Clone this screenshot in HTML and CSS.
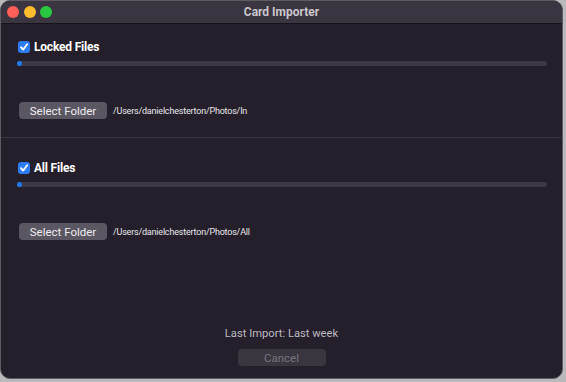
FILE: index.html
```html
<!DOCTYPE html>
<html lang="en">
<head>
  <meta charset="UTF-8">
  <title>Card Importer</title>
  <link rel="stylesheet" href="styles.css">
</head>
<body>

<div class="window">
  <!-- TITLE BAR -->
  <div class="titlebar">
    <div class="lights">
      <span class="light red"></span>
      <span class="light yellow"></span>
      <span class="light green"></span>
    </div>
    <div class="title">Card Importer</div>
  </div>

  <div class="section first">
    <label class="check-row">
      <span class="checkbox">
        <svg width="12" height="12" viewBox="0 0 12 12"><path d="M3 6.2 L5.1 8.6 L9.2 3.2" fill="none" stroke="#fff" stroke-width="1.8" stroke-linecap="round" stroke-linejoin="round"/></svg>
      </span>
      Locked Files
    </label>
    <div class="progress"><div class="progress-fill"></div></div>
    <div class="folder-row">
      <button class="btn">Select Folder</button>
      <span class="path">/Users/danielchesterton/Photos/In</span>
    </div>
  </div>

  <div class="divider"></div>

  <div class="section">
    <label class="check-row">
      <span class="checkbox">
        <svg width="12" height="12" viewBox="0 0 12 12"><path d="M3 6.2 L5.1 8.6 L9.2 3.2" fill="none" stroke="#fff" stroke-width="1.8" stroke-linecap="round" stroke-linejoin="round"/></svg>
      </span>
      All Files
    </label>
    <div class="progress"><div class="progress-fill"></div></div>
    <div class="folder-row">
      <button class="btn">Select Folder</button>
      <span class="path">/Users/danielchesterton/Photos/All</span>
    </div>
  </div>

  <div class="footer">
    <div class="last-import">Last Import: Last week</div>
    <button class="btn btn-disabled">Cancel</button>
  </div>
</div>

</body>
</html>
```

FILE: styles.css
```css
body {
  margin: 0;
  background-color: #b9b9bb;
  font-family: Roboto, "Liberation Sans", sans-serif;
}

.window {
  width: 561px;
  height: 377px;
  background-color: #241f2a;
  border: 1px solid #5e5b63;
  border-radius: 10px;
  overflow: hidden;
  display: flex;
  flex-direction: column;
}

.titlebar {
  height: 22px;
  background-color: #3a3540;
  border-bottom: 1px solid #16131a;
  display: flex;
  align-items: center;
  position: relative;
}

.lights {
  display: flex;
  gap: 4.5px;
  padding-left: 6px;
}

.light {
  width: 12px;
  height: 12px;
  border-radius: 50%;
}

.red { background-color: #fe5f57; }
.yellow { background-color: #febc2e; }
.green { background-color: #28c840; }

.title {
  position: absolute;
  left: 0;
  right: 0;
  text-align: center;
  color: #c9c6cc;
  font-size: 12px;
  font-weight: 700;
}

.section {
  padding: 23px 15px 0 16px;
  height: 90px;
}

.section.first {
  padding-top: 16px;
  height: 97px;
}

.check-row {
  display: flex;
  align-items: center;
  gap: 4px;
  color: #ffffff;
  font-size: 12px;
  font-weight: 700;
  letter-spacing: -0.2px;
  height: 13px;
}

.checkbox {
  width: 12px;
  height: 12px;
  margin-left: 1px;
  border-radius: 3px;
  background-color: #2b7cf6;
  display: flex;
}

.progress {
  margin-top: 8px;
  height: 5px;
  border-radius: 3px;
  background-color: #3c3844;
}

.progress-fill {
  width: 5px;
  height: 5px;
  border-radius: 50%;
  background-color: #1e7bf2;
}

.folder-row {
  margin-top: 36px;
  display: flex;
  align-items: center;
  gap: 6px;
}

.btn {
  width: 88px;
  height: 17px;
  margin-left: 2px;
  padding: 0;
  border: none;
  border-radius: 4px;
  background-color: #5b5762;
  color: #eeecf0;
  font-family: Roboto, "Liberation Sans", sans-serif;
  font-size: 11.5px;
}

.path {
  color: #e8e6ea;
  font-size: 9px;
  letter-spacing: -0.2px;
}

.divider {
  height: 1px;
  background-color: #38343e;
}

.footer {
  margin-top: auto;
  padding-bottom: 12px;
  display: flex;
  flex-direction: column;
  align-items: center;
  gap: 8px;
}

.last-import {
  color: #bcb9c0;
  font-size: 11.2px;
  margin-bottom: 1px;
}

.btn-disabled {
  margin-left: 0;
  background-color: #3a3640;
  color: #77737c;
}
```
